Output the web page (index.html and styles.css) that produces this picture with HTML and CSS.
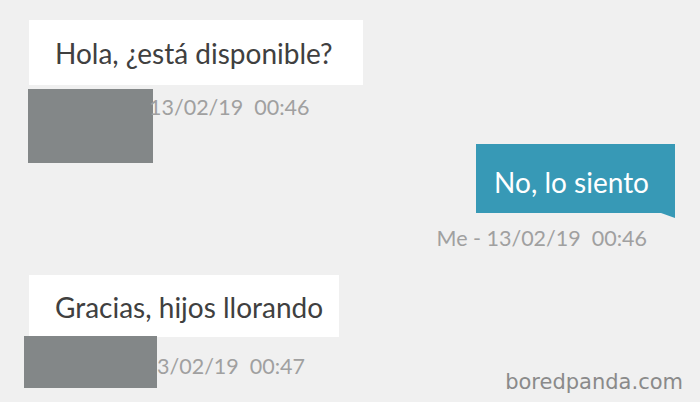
FILE: index.html
```html
<!DOCTYPE html>
<html lang="es">
<head>
  <meta charset="UTF-8" />
  <meta name="viewport" content="width=device-width, initial-scale=1.0"/>
  <title>Chat</title>
  <link rel="stylesheet" href="styles.css">
</head>
<body>

  <div class="chat">

    <div class="msg msg-in first">
      <div class="bubble">Hola, ¿está disponible?</div>
      <div class="meta">
        <div class="redact r1"></div>
        <span class="time">13/02/19&nbsp;&nbsp;00:46</span>
      </div>
    </div>

    <div class="msg msg-out">
      <div class="bubble">No, lo siento</div>
      <div class="meta">
        <span class="time">Me - 13/02/19&nbsp;&nbsp;00:46</span>
      </div>
    </div>

    <div class="msg msg-in last">
      <div class="bubble">Gracias, hijos llorando</div>
      <div class="meta">
        <div class="redact r3"></div>
        <span class="time">3/02/19&nbsp;&nbsp;00:47</span>
      </div>
    </div>

  </div>

  <div class="watermark">boredpanda.com</div>

</body>
</html>
```

FILE: styles.css
```css
html, body {
  margin: 0;
  height: 100%;
}

body {
  background: #f0f0f0;
  font-family: Lato, "Open Sans", sans-serif;
  position: relative;
  overflow: hidden;
}

.chat {
  display: flex;
  flex-direction: column;
  padding: 20px 25px 0 29px;
}

.msg {
  display: flex;
  flex-direction: column;
  align-items: flex-start;
}

.bubble {
  background: #fff;
  color: #404040;
  font-size: 28px;
  padding: 0 30px 0 26px;
  height: 65px;
  line-height: 67px;
}

.meta {
  display: flex;
  align-items: flex-start;
  color: #a0a0a0;
  font-size: 21.5px;
}

.msg-in .meta {
  margin-left: -1px;
}

.redact {
  background: #838788;
  flex-shrink: 0;
}

.r1 {
  width: 125px;
  height: 74px;
  margin-top: 4px;
}

.first .time {
  margin: 9px 0 0 -4px;
}

.msg-out {
  align-items: flex-end;
  margin-top: -19px;
}

.msg-out .bubble {
  position: relative;
  background: #3799b6;
  color: #fff;
  height: 69px;
  line-height: 76px;
  padding: 0 26px 0 18px;
}

.msg-out .bubble::after {
  content: "";
  position: absolute;
  right: 0;
  bottom: -5px;
  border-top: 5px solid #3799b6;
  border-left: 14px solid transparent;
}

.msg-out .meta {
  margin: 12px 28px 0 0;
}

.last {
  margin-top: 24px;
}

.last .bubble {
  height: 62px;
  line-height: 64px;
  padding-right: 16px;
}

.r3 {
  width: 133px;
  height: 52px;
  margin: -1px 0 0 -4px;
}

.last .time {
  margin-top: 16px;
}

.watermark {
  position: absolute;
  right: 17px;
  bottom: 8px;
  font-family: "DejaVu Sans", Verdana, sans-serif;
  font-size: 21px;
  color: #8a8a8a;
}
```
